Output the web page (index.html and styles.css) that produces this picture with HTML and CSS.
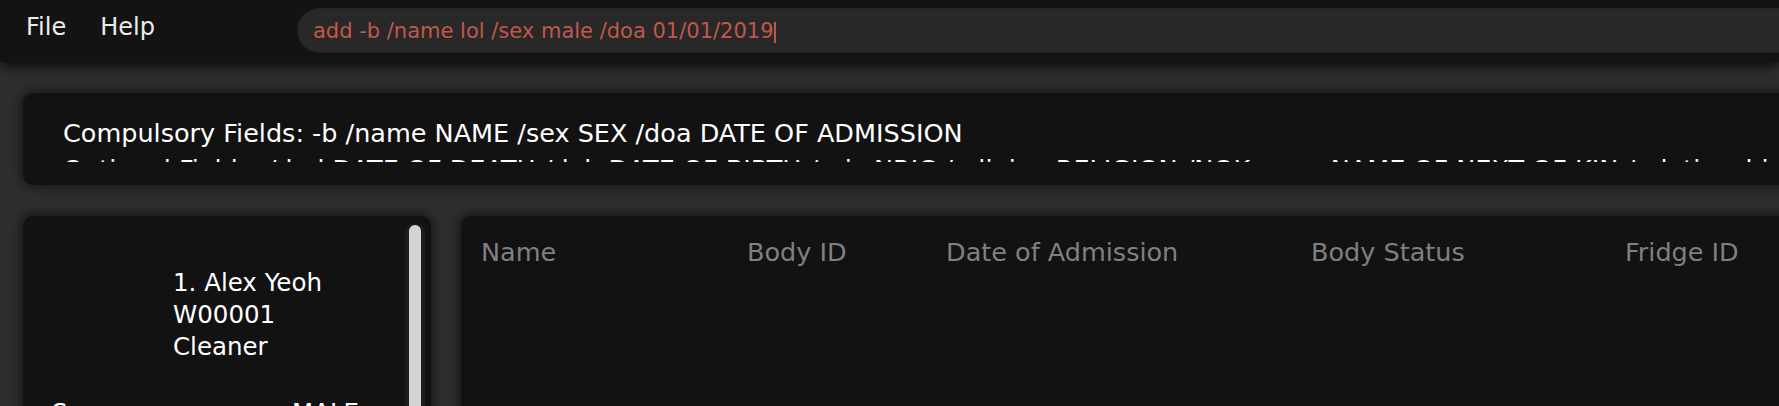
FILE: index.html
```html
<!DOCTYPE html>
<html lang="en">
<head>
<meta charset="utf-8">
<title>Morgue Manager</title>
<link rel="stylesheet" href="styles.css">
</head>
<body>
<header class="topbar">
  <nav class="menu">
    <span class="menu-item">File</span>
    <span class="menu-item">Help</span>
  </nav>
  <div class="cmd"><span class="cmd-text">add -b /name lol /sex male /doa 01/01/2019</span><span class="caret"></span></div>
</header>
<main class="main">
  <section class="panel hint">
    <div class="hint-scroll">
      <p>Compulsory Fields: -b /name NAME /sex SEX /doa DATE OF ADMISSION</p>
      <p>Optional Fields: /dod DATE OF DEATH /dob DATE OF BIRTH /nric NRIC /religion RELIGION /NOKname NAME OF NEXT OF KIN /relationship RELATIONSHIP</p>
    </div>
  </section>
  <div class="lower">
    <section class="panel list">
      <div class="list-content">
        <div class="card">
          <div class="card-head">
            <div>1. Alex Yeoh</div>
            <div>W00001</div>
            <div>Cleaner</div>
          </div>
          <div class="card-row"><span>Sex</span><span>MALE</span></div>
        </div>
      </div>
      <div class="scrollbar"><div class="thumb"></div></div>
    </section>
    <section class="panel table">
      <div class="thead">
        <span>Name</span>
        <span>Body ID</span>
        <span>Date of Admission</span>
        <span>Body Status</span>
        <span>Fridge ID</span>
      </div>
    </section>
  </div>
</main>
</body>
</html>
```

FILE: styles.css
```css
html, body {
  margin: 0;
  height: 100%;
}

body {
  background: #2e2e2e;
  overflow: hidden;
  font-family: "DejaVu Sans", sans-serif;
  color: #ffffff;
}

.topbar {
  height: 62px;
  display: flex;
  align-items: flex-start;
  background: #131313;
  box-shadow: 0 3px 12px rgba(0, 0, 0, 0.9);
  position: relative;
  z-index: 1;
}

.menu {
  flex: none;
  width: 297px;
  box-sizing: border-box;
  display: flex;
  gap: 34px;
  padding: 13px 0 0 26px;
  font-size: 24px;
  line-height: 28px;
  color: #ececec;
}

.cmd {
  flex: 1;
  margin: 8px -40px 0 0;
  height: 45px;
  box-sizing: border-box;
  border-radius: 23px;
  background: #282828;
  border: 1px solid #232323;
  padding: 0 0 0 15px;
  font-size: 21px;
  line-height: 44px;
  color: #c0584a;
  white-space: nowrap;
}

.caret {
  display: inline-block;
  width: 2px;
  height: 21px;
  background: #c0584a;
  vertical-align: -5px;
}

.main {
  padding: 31px 0 0 23px;
  margin-right: -60px;
}

.panel {
  background: #121212;
  border-radius: 10px;
  box-shadow: 0 0 12px 2px rgba(0, 0, 0, 0.55);
}

.hint {
  height: 92px;
  box-sizing: border-box;
  padding: 22px 40px 0;
}

.hint-scroll {
  height: 47px;
  overflow: hidden;
  font-size: 25.5px;
  line-height: 36px;
  white-space: nowrap;
}

.hint-scroll p {
  margin: 0;
}

.lower {
  display: flex;
  gap: 30px;
  margin-top: 31px;
  height: 260px;
}

.list {
  flex: none;
  width: 408px;
  display: flex;
}

.list-content {
  flex: 1;
  overflow: hidden;
}

.card-head {
  padding: 51px 0 0 150px;
  font-size: 24.5px;
  line-height: 32px;
}

.card-row {
  display: grid;
  grid-template-columns: 240px auto;
  padding-left: 29px;
  margin-top: 34px;
  font-size: 24.5px;
  line-height: 32px;
}

.scrollbar {
  flex: none;
  width: 20px;
  margin: 7px 6px 0 0;
  padding: 2px 4px 0;
  box-sizing: border-box;
  background: #1d1d1d;
  border-radius: 10px 10px 0 0;
}

.thumb {
  height: 100%;
  background: #d4d4d4;
  border-radius: 6px 6px 0 0;
}

.table {
  flex: 1;
  padding: 18px 0 0 20px;
}

.thead {
  display: grid;
  grid-template-columns: 266px 199px 365px 314px auto;
  font-size: 25.5px;
  line-height: 36px;
  color: #808080;
  white-space: nowrap;
}
```
